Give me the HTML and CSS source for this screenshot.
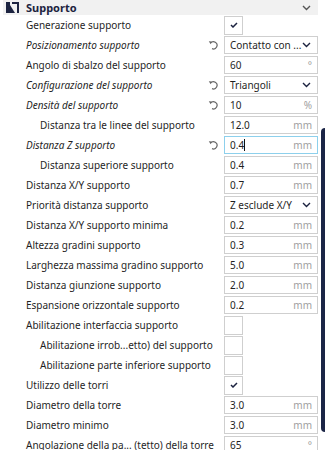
FILE: index.html
```html
<!DOCTYPE html>
<html lang="it">
<head>
  <meta charset="UTF-8" />
  <meta name="viewport" content="width=device-width, initial-scale=1.0" />
  <title>Supporto</title>
  <link rel="stylesheet" href="styles.css">
</head>
<body>
  <div class="panel">
    <!-- Category header -->
    <div class="category">
      <svg class="cat-icon" width="15" height="13" viewBox="0 0 15 13">
        <path d="M1 1 L5 1 L5 4 L10 12 L1 12 Z" fill="#1c2340"/>
        <path d="M7 1 L14 1 L14 12 L12 12 L12 3 L7 3 Z" fill="#1c2340"/>
      </svg>
      <span class="cat-title">Supporto</span>
      <svg class="chev" width="9" height="6" viewBox="0 0 9 6"><path d="M1 1 L4.5 4.5 L8 1" fill="none" stroke="#555" stroke-width="1.4"/></svg>
    </div>

    <div class="setting">
      <span class="label">Generazione supporto</span><span class="reset"></span>
      <div class="check on"><svg width="8" height="6" viewBox="0 0 8 6"><path d="M1 3 L3 5 L7 1" fill="none" stroke="#1c2340" stroke-width="1.5"/></svg></div>
    </div>
    <div class="setting">
      <span class="label changed">Posizionamento supporto</span>
      <span class="reset"><svg width="10" height="10" viewBox="0 0 10 10"><path d="M2.5 3.2 A3.6 3.6 0 1 1 4 8.6" fill="none" stroke="#666" stroke-width="1.2"/><path d="M0.8 1.2 L3.6 1.6 L2.6 4.3 Z" fill="#666"/></svg></span>
      <div class="combo"><span>Contatto con ...</span><svg width="9" height="6" viewBox="0 0 9 6"><path d="M1 1 L4.5 4.5 L8 1" fill="none" stroke="#1c2340" stroke-width="1.4"/></svg></div>
    </div>
    <div class="setting">
      <span class="label">Angolo di sbalzo del supporto</span><span class="reset"></span>
      <div class="field"><span>60</span><span class="unit">°</span></div>
    </div>
    <div class="setting">
      <span class="label changed">Configurazione del supporto</span>
      <span class="reset"><svg width="10" height="10" viewBox="0 0 10 10"><path d="M2.5 3.2 A3.6 3.6 0 1 1 4 8.6" fill="none" stroke="#666" stroke-width="1.2"/><path d="M0.8 1.2 L3.6 1.6 L2.6 4.3 Z" fill="#666"/></svg></span>
      <div class="combo"><span>Triangoli</span><svg width="9" height="6" viewBox="0 0 9 6"><path d="M1 1 L4.5 4.5 L8 1" fill="none" stroke="#1c2340" stroke-width="1.4"/></svg></div>
    </div>
    <div class="setting">
      <span class="label changed">Densità del supporto</span>
      <span class="reset"><svg width="10" height="10" viewBox="0 0 10 10"><path d="M2.5 3.2 A3.6 3.6 0 1 1 4 8.6" fill="none" stroke="#666" stroke-width="1.2"/><path d="M0.8 1.2 L3.6 1.6 L2.6 4.3 Z" fill="#666"/></svg></span>
      <div class="field"><span>10</span><span class="unit">%</span></div>
    </div>
    <div class="setting">
      <span class="label sub">Distanza tra le linee del supporto</span><span class="reset"></span>
      <div class="field"><span>12.0</span><span class="unit">mm</span></div>
    </div>
    <div class="setting">
      <span class="label changed">Distanza Z supporto</span>
      <span class="reset"><svg width="10" height="10" viewBox="0 0 10 10"><path d="M2.5 3.2 A3.6 3.6 0 1 1 4 8.6" fill="none" stroke="#666" stroke-width="1.2"/><path d="M0.8 1.2 L3.6 1.6 L2.6 4.3 Z" fill="#666"/></svg></span>
      <div class="field focus"><span>0.4<i class="caret"></i></span><span class="unit">mm</span></div>
    </div>
    <div class="setting">
      <span class="label sub">Distanza superiore supporto</span><span class="reset"></span>
      <div class="field"><span>0.4</span><span class="unit">mm</span></div>
    </div>
    <div class="setting">
      <span class="label">Distanza X/Y supporto</span><span class="reset"></span>
      <div class="field"><span>0.7</span><span class="unit">mm</span></div>
    </div>
    <div class="setting">
      <span class="label">Priorità distanza supporto</span><span class="reset"></span>
      <div class="combo"><span>Z esclude X/Y</span><svg width="9" height="6" viewBox="0 0 9 6"><path d="M1 1 L4.5 4.5 L8 1" fill="none" stroke="#1c2340" stroke-width="1.4"/></svg></div>
    </div>
    <div class="setting">
      <span class="label">Distanza X/Y supporto minima</span><span class="reset"></span>
      <div class="field"><span>0.2</span><span class="unit">mm</span></div>
    </div>
    <div class="setting">
      <span class="label">Altezza gradini supporto</span><span class="reset"></span>
      <div class="field"><span>0.3</span><span class="unit">mm</span></div>
    </div>
    <div class="setting">
      <span class="label">Larghezza massima gradino supporto</span><span class="reset"></span>
      <div class="field"><span>5.0</span><span class="unit">mm</span></div>
    </div>
    <div class="setting">
      <span class="label">Distanza giunzione supporto</span><span class="reset"></span>
      <div class="field"><span>2.0</span><span class="unit">mm</span></div>
    </div>
    <div class="setting">
      <span class="label">Espansione orizzontale supporto</span><span class="reset"></span>
      <div class="field"><span>0.2</span><span class="unit">mm</span></div>
    </div>
    <div class="setting">
      <span class="label">Abilitazione interfaccia supporto</span><span class="reset"></span>
      <div class="check"></div>
    </div>
    <div class="setting">
      <span class="label sub">Abilitazione irrob...etto) del supporto</span><span class="reset"></span>
      <div class="check"></div>
    </div>
    <div class="setting">
      <span class="label sub">Abilitazione parte inferiore supporto</span><span class="reset"></span>
      <div class="check"></div>
    </div>
    <div class="setting">
      <span class="label">Utilizzo delle torri</span><span class="reset"></span>
      <div class="check on"><svg width="8" height="6" viewBox="0 0 8 6"><path d="M1 3 L3 5 L7 1" fill="none" stroke="#1c2340" stroke-width="1.5"/></svg></div>
    </div>
    <div class="setting">
      <span class="label">Diametro della torre</span><span class="reset"></span>
      <div class="field"><span>3.0</span><span class="unit">mm</span></div>
    </div>
    <div class="setting">
      <span class="label">Diametro minimo</span><span class="reset"></span>
      <div class="field"><span>3.0</span><span class="unit">mm</span></div>
    </div>
    <div class="setting">
      <span class="label">Angolazione della pa... (tetto) della torre</span><span class="reset"></span>
      <div class="field"><span>65</span><span class="unit">°</span></div>
    </div>

    <!-- scrollbar handle over the list -->
    <div class="scroll-handle"></div>
  </div>
</body>
</html>
```

FILE: styles.css
```css
* {
  margin: 0;
  padding: 0;
  box-sizing: border-box;
}
body {
  font-family: "Noto Sans", "Open Sans", sans-serif;
  font-size: 10px;
  color: #1f1f1f;
  background: #fff;
  overflow: hidden;
}
.panel {
  position: relative;
  width: 325px;
  height: 450px;
}
/* Category header */
.category {
  display: flex;
  align-items: center;
  height: 15px;
  margin: 0 7px 0 3px;
  padding-left: 2px;
  background: #f1f1f1;
}
.cat-icon {
  margin-right: 6px;
}
.cat-title {
  flex: 1;
  font-weight: bold;
  font-size: 11px;
  color: #1c2340;
}
.chev {
  margin-right: 7px;
}
/* Setting rows: label, reset button, control */
.setting {
  display: grid;
  grid-template-columns: minmax(0, 1fr) 16px 94px;
  align-items: center;
  height: 20px;
  width: 318px;
}
.setting:first-of-type {
  margin-top: 1px;
}
.label {
  padding-left: 26px;
  white-space: nowrap;
}
.label.sub {
  padding-left: 40px;
}
.label.changed {
  font-style: italic;
}
.reset {
  display: flex;
  justify-content: flex-start;
  align-items: center;
}
.field,
.combo {
  display: flex;
  align-items: center;
  justify-content: space-between;
  height: 18px;
  border: 1px solid #cfcfcf;
  padding: 0 5px;
  background: #fff;
  white-space: nowrap;
}
.field.focus {
  border-color: #8dd0ec;
}
.unit {
  color: #a0a0a0;
}
.caret {
  display: inline-block;
  width: 1px;
  height: 12px;
  background: #111;
  vertical-align: -2px;
}
.combo svg {
  margin-right: 1px;
  flex: none;
}
.check {
  display: flex;
  align-items: center;
  justify-content: center;
  width: 19px;
  height: 19px;
  border: 1px solid #cfcfcf;
  background: #fff;
}
.scroll-handle {
  position: absolute;
  left: 321px;
  top: 128px;
  width: 8px;
  height: 304px;
  border-radius: 4px;
  background: #1b2546;
}
```
